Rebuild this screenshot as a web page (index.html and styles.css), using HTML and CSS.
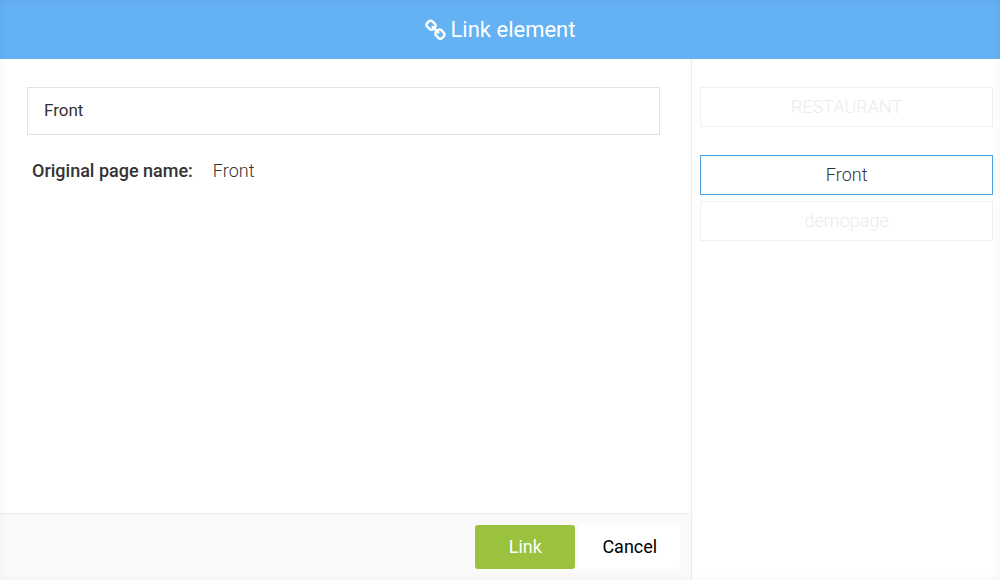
FILE: index.html
```html
<!DOCTYPE html>
<html lang="en">
<head>
    <meta charset="UTF-8">
    <meta name="viewport" content="width=device-width, initial-scale=1.0">
    <title>Link element</title>
    <link rel="stylesheet" href="styles.css">
</head>
<body>
    <form class="dialog">
        <header class="dialog-header">
            <svg class="link-icon" viewBox="0 0 1664 1792" aria-hidden="true">
                <path fill="currentColor" d="M1456 1216q0-40-28-68l-208-208q-28-28-68-28-42 0-72 32 3 3 19 18.500t21.500 21.500 15 19 13 25.500 3.500 27.500q0 40-28 68t-68 28q-15 0-27.500-3.500t-25.500-13-19-15-21.500-21.500-18.500-19q-33 31-33 73 0 40 28 68l206 207q27 27 68 27 40 0 68-26l147-146q28-28 28-67zm-703-705q0-40-28-68l-206-207q-28-28-68-28-39 0-68 27l-147 146q-28 28-28 67 0 40 28 68l208 208q27 27 68 27 42 0 72-31-3-3-19-18.500t-21.500-21.500-15-19-13-25.500-3.500-27.500q0-40 28-68t68-28q15 0 27.500 3.500t25.500 13 19 15 21.500 21.500 18.500 19q33-31 33-73zm895 705q0 120-85 203l-147 146q-83 83-203 83-121 0-204-85l-206-207q-83-83-83-203 0-123 88-209l-88-88q-86 88-208 88-120 0-204-84l-208-208q-84-84-84-204t85-203l147-146q83-83 203-83 121 0 204 85l206 207q83 83 83 203 0 123-88 209l88 88q86-88 208-88 120 0 204 84l208 208q84 84 84 204z"/>
            </svg>
            <h1>Link element</h1>
        </header>

        <div class="dialog-body">
            <main class="content">
                <div class="fields">
                    <input type="text" class="link-input" value="Front" aria-label="Link name">
                    <dl class="page-info">
                        <dt>Original page name:</dt>
                        <dd>Front</dd>
                    </dl>
                </div>
                <footer class="actions">
                    <button type="submit" class="btn btn-link">Link</button>
                    <button type="button" class="btn btn-cancel">Cancel</button>
                </footer>
            </main>

            <!-- Site and its pages -->
            <aside class="sidebar">
                <button type="button" class="page-btn site-btn">RESTAURANT</button>
                <button type="button" class="page-btn active">Front</button>
                <button type="button" class="page-btn">demopage</button>
            </aside>
        </div>
    </form>
</body>
</html>
```
FILE: styles.css
```css
:root {
    --blue: #64b1f4;
    --green: #9bc23f;
    --dark: #333;
    --line: #ececec;
}
* {
    box-sizing: border-box;
    margin: 0;
    padding: 0;
}
body {
    background: #fff;
    color: var(--dark);
    font-family: Roboto, sans-serif;
    font-size: 18px;
    line-height: 24px;
}
.dialog {
    position: relative;
    display: flex;
    flex-direction: column;
    min-height: 100vh;
}
/* soft shade along the dialog edges */
.dialog::after {
    content: "";
    position: absolute;
    inset: 0;
    box-shadow: inset 0 0 10px rgba(0,0,0,0.05);
    pointer-events: none;
}
.dialog-header {
    display: flex;
    align-items: center;
    justify-content: center;
    gap: 5px;
    padding: 14px 0 13px;
    background: var(--blue);
    color: white;
}
.dialog-header h1 {
    font-size: 22px;
    font-weight: 400;
    line-height: 32px;
}
.link-icon {
    width: 21px;
    height: 23px;
}
.dialog-body {
    flex: 1;
    display: grid;
    grid-template-columns: minmax(0, 9fr) minmax(0, 4fr);
}
.content {
    display: flex;
    flex-direction: column;
}
.fields {
    flex: 1;
    padding: 28px 31px 28px 27px;
    border-right: 1px solid var(--line);
}
.link-input {
    display: block;
    width: 100%;
    height: 48px;
    padding: 0 16px 2px;
    border: 1px solid #dde3ea;
    background: white;
    color: var(--dark);
    font: inherit;
    font-size: 17px;
}
.page-info {
    display: flex;
    gap: 20px;
    margin-top: 24px;
    padding-left: 5px;
}
.page-info dt {
    font-weight: 500;
}
.page-info dd {
    font-weight: 300;
}
.actions {
    display: flex;
    justify-content: flex-end;
    gap: 4px;
    padding: 11px;
    border-top: 1px solid var(--line);
    border-right: 1px solid var(--line);
    background: #fafafa;
}
.btn {
    height: 44px;
    border: none;
    border-radius: 3px;
    font: inherit;
    cursor: pointer;
}
.btn-link {
    width: 100px;
    background: var(--green);
    color: white;
}
.btn-cancel {
    width: 101px;
    background: white;
    color: black;
}
.sidebar {
    display: flex;
    flex-direction: column;
    gap: 6px;
    padding: 28px 7px 28px 8px;
}
.page-btn {
    height: 40px;
    border: 1px solid #f0f0f0;
    background: white;
    color: #ebebeb;
    font: inherit;
    font-weight: 300;
    cursor: pointer;
}
.site-btn {
    margin-bottom: 22px;
}
.page-btn.active {
    border-color: #4c9fe0;
    color: var(--dark);
}
```
